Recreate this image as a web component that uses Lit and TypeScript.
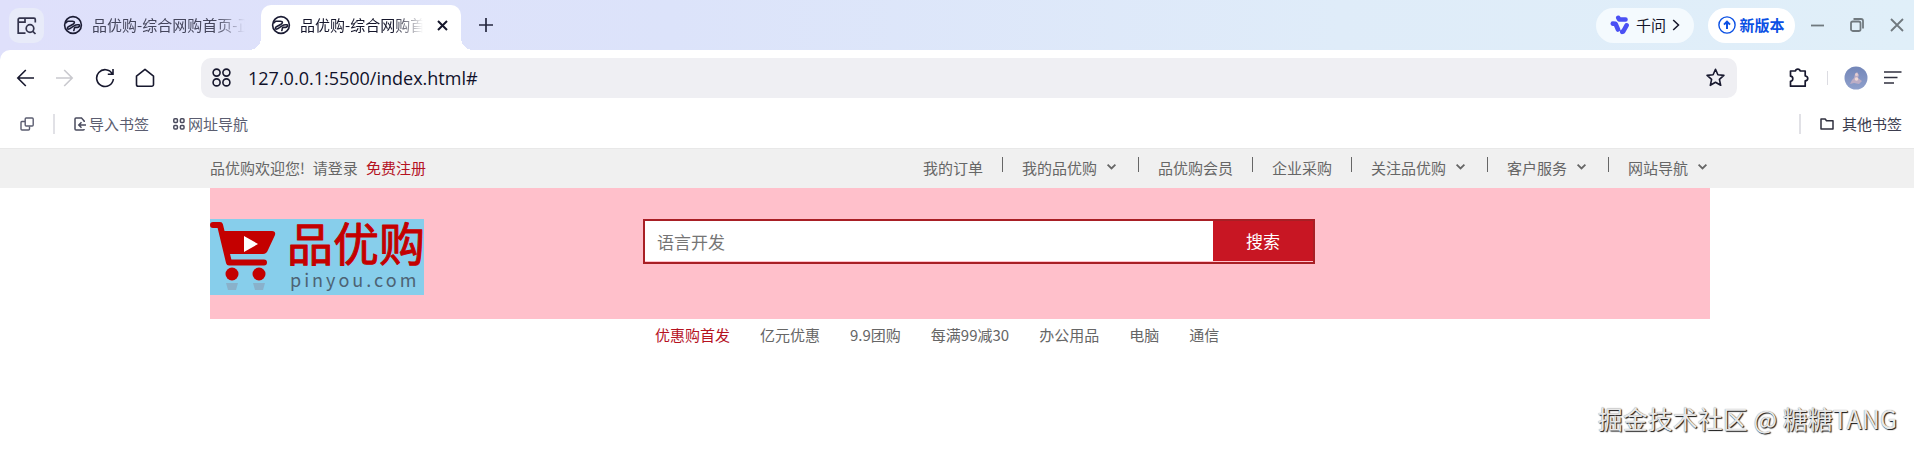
import { LitElement, html, css } from "lit";
import { customElement } from "lit/decorators.js";

const globe = html`<svg class="globe" width="20" height="20" viewBox="0 0 20 20" fill="none" stroke="#1b1c34" stroke-width="1.6" stroke-linecap="round" stroke-linejoin="round"><circle cx="10" cy="10" r="8.4"/><path d="M2.800 7.800L4.500 6.300H9.500C12.300 6.300 11.600 8.300 10 9.300L5 12C3.500 13.500 4.600 14.600 6.500 13.800L11 10.800C12.500 9.700 14 9.600 16 9.800C17.300 10.400 16.300 12.200 14.500 12.400H12.300C10.600 12.800 11.600 14.300 10.800 15.500"/></svg>`;
const chevron = html`<svg class="chev" width="15" height="15" viewBox="0 0 15 15" fill="none" stroke="#666" stroke-width="1.8"><path d="M3.600 4.700L7.500 8.500L11.400 4.700"/></svg>`;

@customElement("browser-tabs")
export class BrowserTabs extends LitElement {
  static styles = css`
    :host { display: flex; height: 50px; align-items: stretch; background: linear-gradient(90deg, #dfe0fb 0%, #dce3fa 35%, #dfecf9 70%, #e0eff9 100%); font: 15px/20px "Noto Sans CJK SC", sans-serif; color: #15162b; }
    button { font: inherit; color: inherit; border: 0; background: none; padding: 0; display: flex; align-items: center; justify-content: center; }
    svg { flex: none; display: block; }
    .search { width: 35px; height: 35px; margin: 8px 0 0 9px; border-radius: 10px; background: #e8ebf9; }
    .tab { display: flex; align-items: center; white-space: nowrap; box-sizing: border-box; }
    .globe { margin-right: 9px; }
    .title { flex: 1; overflow: hidden; mask-image: linear-gradient(90deg, #000 calc(100% - 30px), transparent); }
    .idle { width: 217px; padding: 0 16px 0 19px; color: #45465c; }
    .active { position: relative; width: 200px; height: 45px; margin-top: 5px; padding: 0 13px 5px 10px; background: #fff; border-radius: 10px 10px 0 0; }
    .active::before, .active::after { content: ""; position: absolute; bottom: 0; width: 12px; height: 12px; }
    .active::before { left: -12px; background: radial-gradient(circle at 0 0, transparent 12px, #fff 12px); }
    .active::after { right: -12px; background: radial-gradient(circle at 100% 0, transparent 12px, #fff 12px); }
    .close { margin-left: 14px; }
    .plus { width: 20px; height: 50px; margin-left: 15px; }
    .right { margin-left: auto; display: flex; align-items: center; }
    .pill { height: 35px; border-radius: 18px; }
    .ask { width: 98px; background: #f4fafe; gap: 6px; margin-right: 14px; }
    .new { width: 87px; background: #fff; color: #0b50e4; font-weight: 700; gap: 3px; margin-right: 15px; }
    .win { width: 15px; }
    .gap { margin-left: 24px; }
    .end { margin-left: 25px; margin-right: 10px; }
  `;
  render() {
    return html`
      <button class="search" aria-label="搜索标签页"><svg width="20" height="18" viewBox="0 0 20 18" fill="none" stroke="#33344c" stroke-width="1.700"><path d="M8.500 16.200H1.200V2.500A1.300 1.300 0 0 1 2.500 1.200H17A1.300 1.300 0 0 1 18.300 2.500V5.500M1.200 5.200H8V1.500"/><circle cx="13" cy="11.500" r="3.800"/><path d="M15.800 14.300L18.500 17"/></svg></button>
      <div class="tab idle">${globe}<span class="title">品优购-综合网购首页-正品</span></div>
      <div class="tab active">${globe}<span class="title">品优购-综合网购首页</span><button class="close" aria-label="关闭"><svg width="11" height="11" viewBox="0 0 11 11" stroke="#15162b" stroke-width="2"><path d="M1 1L10 10M10 1L1 10"/></svg></button></div>
      <button class="plus" aria-label="新标签页"><svg width="16" height="16" viewBox="0 0 16 16" stroke="#26283f" stroke-width="1.700"><path d="M8 1V15M1 8H15"/></svg></button>
      <div class="right">
        <button class="pill ask"><svg width="20" height="20" viewBox="0 0 20 20" fill="none" stroke="#4a50f4" stroke-width="4.600" stroke-linejoin="round" stroke-linecap="round"><path d="M8.300 2.800L9.300 4.500H15.500M2.800 8.600L5.600 8.800L8 14.500M16.600 10.300L13.200 16.500L12.200 16.800"/></svg><span>千问</span><svg width="8" height="12" viewBox="0 0 8 12" fill="none" stroke="#15162b" stroke-width="1.500"><path d="M1.200 1L6.500 6L1.200 11"/></svg></button>
        <button class="pill new"><svg width="18" height="18" viewBox="0 0 18 18" fill="none" stroke="#0b50e4"><circle cx="9" cy="9" r="8.100" stroke-width="1.400"/><path stroke-width="2" d="M9 13V6M6 8.600L9 5.600L12 8.600"/></svg><span>新版本</span></button>
        <button class="win" aria-label="最小化"><svg width="13" height="13" viewBox="0 0 13 13" stroke="#70797f" stroke-width="1.800"><path d="M0 6.500H13"/></svg></button>
        <button class="win gap" aria-label="还原"><svg width="14" height="14" viewBox="0 0 14 14" fill="none" stroke="#70797f" stroke-width="1.800"><rect x="1" y="3.500" width="9.500" height="9.500" rx="1.800"/><path d="M3.500 1H11A2 2 0 0 1 13 3V10.500"/></svg></button>
        <button class="win end" aria-label="关闭窗口"><svg width="14" height="14" viewBox="0 0 14 14" stroke="#70797f" stroke-width="1.800"><path d="M1 1L13 13M13 1L1 13"/></svg></button>
      </div>`;
  }
}

@customElement("browser-tools")
export class BrowserTools extends LitElement {
  static styles = css`
    :host { display: block; background: #dfe0fb; font: 15px/20px "Noto Sans CJK SC", sans-serif; color: #5b5d70; border-bottom: 1px solid #e8e8e8; }
    svg { display: block; flex: none; }
    button { font: inherit; color: inherit; border: 0; background: none; padding: 0; display: block; }
    a { color: inherit; text-decoration: none; display: flex; align-items: center; gap: 3px; }
    .panel { background: #fff; border-radius: 10px 0 0 0; }
    .row { display: flex; align-items: center; height: 55px; box-sizing: border-box; padding: 0 12px 0 16px; }
    .nav { display: flex; gap: 20px; align-items: center; width: 185px; }
    .nav button + button + button { margin-left: 1px; margin-right: -1px; }
    .nav button + button + button + button { margin: 0 0 0 1px; }
    .addr { flex: 1; height: 40px; border-radius: 10px; background: #efeff3; display: flex; align-items: center; padding: 0 12px 0 11px; }
    .url { flex: 1; border: 0; background: none; outline: 0; padding: 0; margin-left: 17px; font: 18px/24px "Open Sans", sans-serif; color: #10112a; }
    .tools { display: flex; align-items: center; margin-left: 52px; }
    .line { width: 1px; height: 14px; background: #dcdce2; margin: 0 16px 0 18px; }
    .avatar { width: 24px; height: 24px; }
    .menu { margin-left: 16px; }
    .marks { display: flex; align-items: center; height: 37px; padding: 0 12px 6px 20px; }
    .bar { width: 2px; height: 20px; background: #e1e1e6; }
    .m1 { margin: 0 19px; }
    .m2 { margin-left: 24px; }
    .m3 { margin: 0 19px 0 auto; }
    .other { gap: 8px; color: #3c3d4e; }
  `;
  render() {
    return html`<div class="panel">
      <div class="row">
        <div class="nav">
          <button aria-label="后退"><svg width="19" height="18" viewBox="0 0 19 18" fill="none" stroke="#17182e" stroke-width="1.600"><path d="M18 9H2M9.800 1L1.800 9L9.800 17"/></svg></button>
          <button aria-label="前进"><svg width="19" height="18" viewBox="0 0 19 18" fill="none" stroke="#c9c9ce" stroke-width="1.600"><path d="M1 9H17M9.200 1L17.200 9L9.200 17"/></svg></button>
          <button aria-label="刷新"><svg width="20" height="20" viewBox="0 0 20 20" fill="none" stroke="#17182e" stroke-width="1.600"><path d="M17.300 5.800A8.400 8.400 0 1 0 18.400 11M18 1V6.200H12.800"/></svg></button>
          <button aria-label="主页"><svg width="20" height="20" viewBox="0 0 20 20" fill="none" stroke="#17182e" stroke-width="1.600" stroke-linejoin="round"><path d="M1.500 8.200L10 1.300L18.500 8.200V16.500A1.800 1.800 0 0 1 16.700 18.300H3.300A1.800 1.800 0 0 1 1.500 16.500Z"/></svg></button>
        </div>
        <div class="addr">
          <svg width="19" height="19" viewBox="0 0 19 19" fill="none" stroke="#17182e" stroke-width="1.600"><circle cx="4.600" cy="4.600" r="3.500"/><circle cx="14.400" cy="4.600" r="3.500"/><circle cx="4.600" cy="14.400" r="3.500"/><circle cx="14.400" cy="14.400" r="3.500"/></svg>
          <input class="url" aria-label="地址" value="127.0.0.1:5500/index.html#">
          <button aria-label="收藏"><svg width="19" height="19" viewBox="0 0 19 19" fill="none" stroke="#17182e" stroke-width="1.600" stroke-linejoin="round"><path d="M9.500 1.300L11.900 6.800L17.900 7.400L13.400 11.400L14.700 17.300L9.500 14.200L4.300 17.300L5.600 11.400L1.100 7.400L7.100 6.800Z"/></svg></button>
        </div>
        <div class="tools">
          <button aria-label="扩展"><svg width="20" height="20" viewBox="0 0 20 20" fill="none" stroke="#17182e" stroke-width="1.700" stroke-linejoin="round"><path d="M1.500 3H6.500C6.800 .5 10.800 .5 11.100 3H16.200V8C19.600 8.200 19.600 12.600 16.200 12.800V18.200H1.500V13.300C4.600 12.800 4.600 8.600 1.500 8.200Z"/></svg></button>
          <span class="line"></span>
          <svg class="avatar" viewBox="0 0 24 24"><defs><linearGradient id="sky" x2="0" y2="1"><stop offset="0" stop-color="#7386b8"/><stop offset="1" stop-color="#8fa0cc"/></linearGradient></defs><circle cx="12" cy="12" r="11.500" fill="url(#sky)"/><path d="M11 8L13 6L15 9L14 12L18 15L15 18L10 17L6 18L8 14L10 12Z" fill="#c9b3c6" opacity=".8"/><circle cx="12.500" cy="13" r="1.800" fill="#efd8d4"/><circle cx="12.500" cy="8.500" r="1.500" fill="#e3cdd0"/></svg>
          <button class="menu" aria-label="菜单"><svg width="18" height="13" viewBox="0 0 18 13" stroke="#30313f" stroke-width="1.700"><path d="M0 1H17.500M0 6.500H13.500M0 12H10"/></svg></button>
        </div>
      </div>
      <div class="marks">
        <button aria-label="侧栏"><svg width="14" height="14" viewBox="0 0 14 14" fill="none" stroke="#5b5d70" stroke-width="1.400"><rect x="5.200" y="1" width="8" height="8" rx="1"/><path d="M5 4.500H1.900A1 1 0 0 0 1 5.500V12A1 1 0 0 0 2 13H8.500A1 1 0 0 0 9.500 12V9.500"/></svg></button>
        <span class="bar m1"></span>
        <a href="#"><svg width="12" height="14" viewBox="0 0 12 14" fill="none" stroke="#4a4b5e" stroke-width="1.500"><path d="M10.200 5V4L7.500 1H2A1 1 0 0 0 1 2V12A1 1 0 0 0 2 13H9.200A1 1 0 0 0 10.200 12M12 8H5M7.500 5.300L4.800 8L7.500 10.700"/></svg>导入书签</a>
        <a class="m2" href="#"><svg width="12" height="12" viewBox="0 0 12 12" fill="none" stroke="#4a4b5e" stroke-width="1.500"><rect x=".8" y=".8" width="3.600" height="3.600" rx="1"/><rect x="7.400" y=".8" width="3.600" height="3.600" rx="1"/><rect x=".8" y="7.400" width="3.600" height="3.600" rx="1"/><rect x="7.400" y="7.400" width="3.600" height="3.600" rx="1"/></svg>网址导航</a>
        <span class="bar m3"></span>
        <a class="other" href="#"><svg width="14" height="12" viewBox="0 0 14 12" fill="none" stroke="#30313f" stroke-width="1.500" stroke-linejoin="round"><path d="M1 1H5.200L6.500 2.800H13V11H1Z"/></svg>其他书签</a>
      </div>
    </div>`;
  }
}

@customElement("shop-page")
export class ShopPage extends LitElement {
  static styles = css`
    :host { display: block; padding-top: 0; font: 15px/20px "Noto Sans CJK SC", sans-serif; color: #666; }
    a { color: inherit; text-decoration: none; }
    svg { display: block; }
    .shortcut { background: #f0f0f0; }
    .inner { max-width: 1500px; margin: 0 auto; }
    .frame { padding: 0 204px 0 210px; }
    .top { display: flex; justify-content: space-between; height: 37px; padding-bottom: 2px; align-items: center; }
    .hello, .links { display: flex; align-items: center; }
    .hello { gap: 8px; }
    .red { color: #b5121f; }
    .links > a { display: flex; align-items: center; gap: 7px; }
    .links > i { width: 1px; height: 15px; background: #666; margin: 0 19px 7px; }
    .header { display: flex; align-items: flex-start; height: 100px; padding-top: 31px; background: pink; }
    .logo { width: 214px; height: 76px; background: skyblue; overflow: hidden; }
    .logo text { font-family: "Noto Sans CJK SC", sans-serif; }
    .search { display: flex; align-items: flex-start; width: 668px; height: 41px; margin-left: 219px; border: 2px solid #a81f25; }
    .search input { flex: 1; min-width: 0; height: 40px; box-sizing: border-box; border: 0; border-radius: 0; padding: 0 12px; background: #fff; font: 17px/24px "Noto Sans CJK SC", sans-serif; outline: 0; }
    .search input::placeholder { color: #757575; opacity: 1; }
    .search button { width: 100px; height: 40px; border: 0; padding: 0; background: #c81623; color: #fff; font: 17px/24px "Noto Sans CJK SC", sans-serif; }
    .hot { display: flex; gap: 30px; padding: 6px 0 0 445px; }
  `;
  private links: [string, boolean][] = [["我的订单", false], ["我的品优购", true], ["品优购会员", false], ["企业采购", false], ["关注品优购", true], ["客户服务", true], ["网站导航", true]];
  private words = ["优惠购首发", "亿元优惠", "9.9团购", "每满99减30", "办公用品", "电脑", "通信"];
  render() {
    return html`
      <div class="shortcut"><div class="frame"><div class="inner top">
        <div class="hello"><span>品优购欢迎您!</span><a href="#">请登录</a><a class="red" href="#">免费注册</a></div>
        <nav class="links">${this.links.map(([t, c], i) => html`${i ? html`<i></i>` : ""}<a href="#">${t}${c ? chevron : ""}</a>`)}</nav>
      </div></div></div>
      <div class="frame"><div class="inner">
        <div class="header">
          <a class="logo" href="#" aria-label="品优购"><svg width="214" height="76" viewBox="0 0 214 76">
            <path d="M3 6H10L19 43.500H54" fill="none" stroke="#c40000" stroke-width="6" stroke-linecap="round" stroke-linejoin="round"/>
            <path d="M10 12H62Q66 12 65 16L58 31Q56.500 35 53 35H16Z" fill="#c40000"/><path d="M34 17V33L48 25Z" fill="#fff"/>
            <circle cx="22" cy="55" r="6.500" fill="#c40000"/><circle cx="49" cy="55" r="6.500" fill="#c40000"/>
            <g fill="#8b9fb5" opacity=".6"><path d="M16 64H28L26 71H18Z"/><path d="M43 64H55L53 71H45Z"/></g>
            <text x="77" y="42" font-size="46" fill="#c40000" stroke="#c40000" stroke-width="1" stroke-linejoin="round">品优购</text>
            <text x="80" y="68" font-size="18" fill="#4d6374" letter-spacing="3">pinyou.com</text>
          </svg></a>
          <form class="search"><input type="search" aria-label="搜索商品" placeholder="语言开发"><button type="button">搜索</button></form>
        </div>
        <div class="hot">${this.words.map((w, i) => html`<a class=${i ? "" : "red"} href="#">${w}</a>`)}</div>
      </div></div>`;
  }
}

@customElement("app-root")
export class AppRoot extends LitElement {
  static styles = css`
    :host { display: flex; flex-direction: column; min-height: 100vh; background: #fff; }
    .mark { margin: auto 17px 13px auto; font: 25px/36px "Noto Sans CJK SC", sans-serif; color: #e8e8e8; text-shadow: 1px 1px 1px #111, 0 0 1px #888; }
  `;
  render() {
    return html`<browser-tabs></browser-tabs><browser-tools></browser-tools><shop-page></shop-page><div class="mark">掘金技术社区 @ 糖糖TANG</div>`;
  }
}
